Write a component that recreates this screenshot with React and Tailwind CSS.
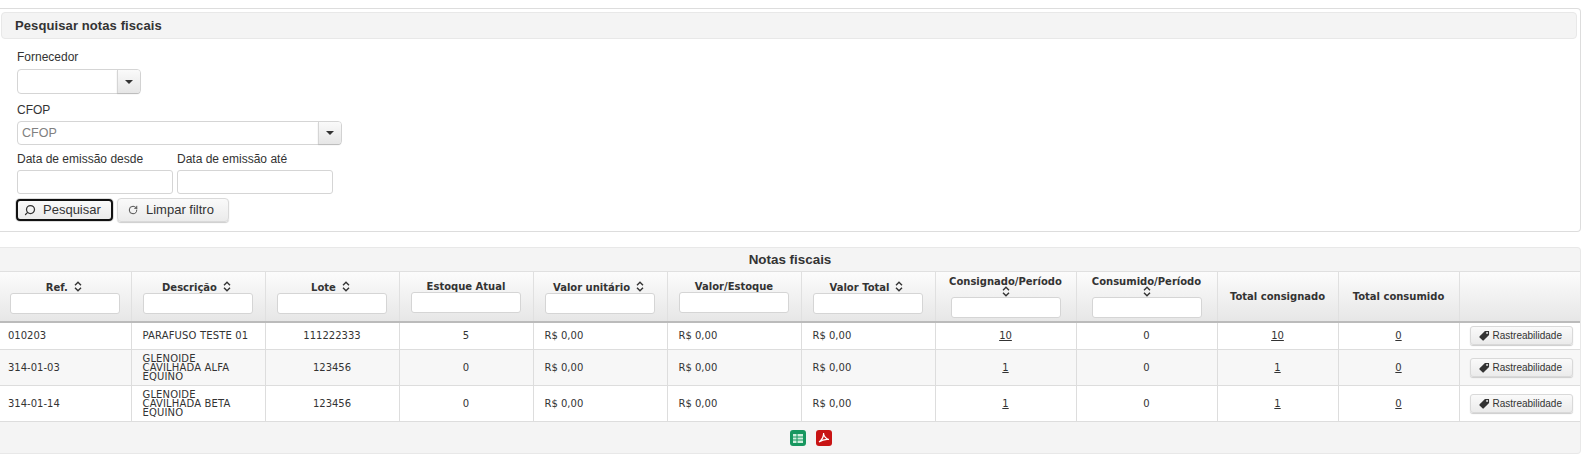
import { Search, RotateCw } from "lucide-react";

const columns = [
  { label: "Ref.", sort: true, filter: true, width: "w-[131px]" },
  { label: "Descrição", sort: true, filter: true, width: "w-[134px]" },
  { label: "Lote", sort: true, filter: true, width: "w-[134px]" },
  { label: "Estoque Atual", filter: true, width: "w-[134px]" },
  { label: "Valor unitário", sort: true, filter: true, width: "w-[134px]" },
  { label: "Valor/Estoque", filter: true, width: "w-[134px]" },
  { label: "Valor Total", sort: true, filter: true, width: "w-[134px]" },
  { label: "Consignado/Período", sort: true, filter: true, stacked: true, width: "w-[141px]" },
  { label: "Consumido/Período", sort: true, filter: true, stacked: true, width: "w-[141px]" },
  { label: "Total consignado", width: "w-[121px]" },
  { label: "Total consumido", width: "w-[121px]" },
  { label: "", width: "w-[121px]" },
];

const rows = [
  { ref: "010203", desc: "PARAFUSO TESTE 01", lote: "111222333", estoque: "5", cons: "10", total: "10" },
  { ref: "314-01-03", desc: "GLENOIDE CAVILHADA ALFA EQUINO", lote: "123456", estoque: "0", cons: "1", total: "1" },
  { ref: "314-01-14", desc: "GLENOIDE CAVILHADA BETA EQUINO", lote: "123456", estoque: "0", cons: "1", total: "1" },
];

function SortIcon({ className }) {
  return (
    <svg width="8" height="11" viewBox="0 0 8 11" className={`shrink-0 ${className}`}>
      <path d="M1 4.200 4 1.200 7 4.200M1 6.800 4 9.800 7 6.800" fill="none" stroke="#333" strokeWidth="1.400" />
    </svg>
  );
}

function Combo({ size, text }) {
  return (
    <div className={`flex rounded-[4px] border border-[#d5d5d5] bg-white ${size}`}>
      <span className="flex-1 pl-[4px] text-[12.5px] leading-[22px] text-[#808080]">{text}</span>
      <span className="flex w-[23px] items-center justify-center rounded-r-[3px] border-l border-[#d5d5d5] bg-gradient-to-b from-[#fafafa] to-[#e6e6e6] shadow-[0_1px_1px_#bbb]">
        <span className="h-0 w-0 border-x-[4px] border-t-[4px] border-x-transparent border-t-[#333]" />
      </span>
    </div>
  );
}

function TagIcon() {
  return (
    <svg width="11" height="11" viewBox="0 0 12 12" className="shrink-0">
      <path d="M6.500 1H11v4.500L5.200 11.300a1 1 0 0 1-1.400 0L.7 8.200a1 1 0 0 1 0-1.400Z" fill="#333" />
      <circle cx="8.800" cy="3.200" r="1" fill="#fff" />
    </svg>
  );
}

function HeaderCell({ col }) {
  if (!col.filter) {
    return <div className="pt-[19px] text-center">{col.label}</div>;
  }
  if (col.stacked) {
    return (
      <div className="pt-[4px]">
        <div className="h-[12px] whitespace-nowrap text-center">{col.label}</div>
        <SortIcon className="mx-auto -mt-[2px] block" />
        <input className="mx-auto block h-[21px] w-[110px] rounded-[3px] border border-[#d5d5d5] bg-white" />
      </div>
    );
  }
  return (
    <div className={col.sort ? "pt-[10px]" : "pt-[9px]"}>
      <div className={`flex h-[12px] items-center justify-center ${col.sort ? "pr-[3px]" : ""}`}>
        {col.label}
        {col.sort && <SortIcon className="ml-[6px] -mt-[3px]" />}
      </div>
      <input className={`mx-auto block h-[21px] w-[110px] rounded-[3px] border border-[#d5d5d5] bg-white ${col.sort ? "-mt-[1px]" : "-mt-[1px]"}`} />
    </div>
  );
}

export default function App() {
  return (
    <div className="h-[461px] w-[1584px] overflow-hidden bg-white pt-[8px] pr-[3px] font-['Liberation_Sans',Arial,sans-serif] text-[#333]">
      {/* Filtro */}
      <section className="h-[224px] rounded-r-[4px] border border-l-0 border-[#ddd] bg-white pt-[3px] pl-px pr-[3px]">
        <h2 className="h-[27px] rounded-[4px] border border-[#e8e8e8] bg-[#f4f4f4] pl-[13px] text-[13px] font-bold leading-[26px] tracking-[0.1px]">
          Pesquisar notas fiscais
        </h2>
        <div className="pl-[16px]">
          <label className="mt-[10px] block text-[12px] leading-[16px]">Fornecedor</label>
          <div className="mt-[4px]">
            <Combo size="h-[25px] w-[124px]" text="" />
          </div>
          <label className="mt-[8px] block text-[12px] leading-[16px]">CFOP</label>
          <div className="mt-[3px]">
            <Combo size="h-[24px] w-[325px]" text="CFOP" />
          </div>
          <div className="mt-[6px] flex gap-[4px]">
            <div>
              <label className="block text-[12px] leading-[16px]">Data de emissão desde</label>
              <input className="mt-[3px] block h-[24px] w-[156px] rounded-[3px] border border-[#d5d5d5] bg-white" />
            </div>
            <div>
              <label className="block text-[12px] leading-[16px]">Data de emissão até</label>
              <input className="mt-[3px] block h-[24px] w-[156px] rounded-[3px] border border-[#d5d5d5] bg-white" />
            </div>
          </div>
          <div className="mt-[4px] flex items-start gap-[4px]">
            <button className="-ml-[1px] mt-px flex h-[22px] w-[97px] items-center rounded-[4px] border-2 border-[#111] bg-gradient-to-b from-[#fafafa] to-[#ebebeb] pl-[6px] text-[13px] shadow-[0_0_0_1px_#ddd]">
              <Search size={12} strokeWidth={2.500} className="-scale-x-100" />
              <span className="ml-[7px]">Pesquisar</span>
            </button>
            <button className="flex h-[24px] w-[112px] items-center rounded-[4px] border border-[#d9d9d9] bg-gradient-to-b from-[#fafafa] to-[#ebebeb] pl-[10px] text-[13px] shadow-[0_1px_1px_#ccc]">
              <RotateCw size={10} strokeWidth={2} />
              <span className="ml-[8px]">Limpar filtro</span>
            </button>
          </div>
        </div>
      </section>

      {/* Tabela */}
      <section className="mt-[15px] h-[207px] rounded-r-[4px] border border-l-0 border-[#e8e8e8] bg-[#f4f4f4]">
        <h2 className="h-[23px] text-center text-[13.400px] font-bold leading-[24px]">Notas fiscais</h2>
        <table className="w-full table-fixed border-collapse font-['DejaVu_Sans',Verdana,sans-serif] text-[10px] text-[#333]">
          <thead>
            <tr className="h-[50px] bg-gradient-to-b from-[#fcfcfc] to-[#e6e6e6]">
              {columns.map((col) => (
                <th key={col.label} className={`${col.width} h-[50px] border-x border-t border-b-2 border-x-[#e0e0e0] border-t-[#e0e0e0] border-b-[#bbb] p-0 align-top text-[10px] font-bold leading-[12px] first:border-l-0 last:border-r-0`}>
                  <HeaderCell col={col} />
                </th>
              ))}
            </tr>
          </thead>
          <tbody>
            {rows.map((row, i) => (
              <tr key={row.ref} className={i % 2 ? "bg-[#f7f7f7]" : "bg-white"}>
                <td className={`${i === 0 ? "h-[28px]" : "h-[36px]"} border border-[#ddd] border-l-0 px-[8px]`}>{row.ref}</td>
                <td className="border border-[#ddd] px-[11px] leading-[9px] tracking-[0.15px]">{row.desc}</td>
                <td className="border border-[#ddd] text-center">{row.lote}</td>
                <td className="border border-[#ddd] text-center">{row.estoque}</td>
                <td className="border border-[#ddd] px-[11px]">R$ 0,00</td>
                <td className="border border-[#ddd] px-[11px]">R$ 0,00</td>
                <td className="border border-[#ddd] px-[11px]">R$ 0,00</td>
                <td className="border border-[#ddd] text-center"><a className="underline">{row.cons}</a></td>
                <td className="border border-[#ddd] text-center">0</td>
                <td className="border border-[#ddd] text-center"><a className="underline">{row.total}</a></td>
                <td className="border border-[#ddd] text-center"><a className="underline">0</a></td>
                <td className="border border-[#ddd] border-r-0 px-[10px]">
                  <button className="flex h-[19px] w-[103px] items-center rounded-[3px] border border-[#d9d9d9] bg-gradient-to-b from-[#fafafa] to-[#ebebeb] pl-[8px] font-['Liberation_Sans',Arial,sans-serif] text-[10px] shadow-[0_1px_1px_#ccc]">
                    <TagIcon />
                    <span className="ml-[3px]">Rastreabilidade</span>
                  </button>
                </td>
              </tr>
            ))}
          </tbody>
        </table>
        <div className="flex justify-center gap-[10px] pt-[8px] pl-[41px]">
          <svg width="16" height="16" viewBox="0 0 16 16">
            <rect width="16" height="16" rx="3" fill="#17975f" />
            <rect x="3" y="4" width="10" height="9" fill="#cfeedd" />
            <path d="M3 7h10M3 10h10M7 4v9" stroke="#17975f" strokeWidth="1" />
          </svg>
          <svg width="16" height="16" viewBox="0 0 16 16">
            <rect width="16" height="16" rx="3" fill="#c81414" />
            <path d="M3 12c3-2 5-6 4.500-9C7.500 6 10 9 13 9.500 10 9 6 10 3 12Z" fill="none" stroke="#fff" strokeWidth="1.200" />
          </svg>
        </div>
      </section>
    </div>
  );
}
